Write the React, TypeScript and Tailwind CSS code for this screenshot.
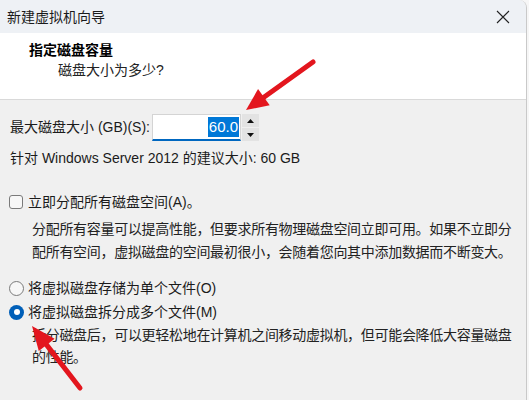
import React from "react";

const font = { fontFamily: '"Liberation Sans", "Noto Sans CJK SC", sans-serif' };

function Arrow({ tail, tip, head = 22, half = 10 }: { tail: [number, number]; tip: [number, number]; head?: number; half?: number }) {
  const dx = tip[0] - tail[0];
  const dy = tip[1] - tail[1];
  const len = Math.hypot(dx, dy);
  const ux = dx / len;
  const uy = dy / len;
  const bx = tip[0] - ux * head;
  const by = tip[1] - uy * head;
  const px = -uy * half;
  const py = ux * half;
  return (
    <g>
      <line x1={tail[0]} y1={tail[1]} x2={bx + ux * 3} y2={by + uy * 3} stroke="#e3161e" strokeWidth={5} strokeLinecap="round" />
      <polygon points={`${tip[0]},${tip[1]} ${bx + px},${by + py} ${bx - px},${by - py}`} fill="#e3161e" />
    </g>
  );
}

export default function App() {
  return (
    <div className="relative w-[529px] h-[400px] overflow-hidden bg-[#f6f6f6] text-[#1b1b1b]" style={font}>
      <div className="w-[527px] h-full flex flex-col bg-[#f0f0f0] border-r border-[#c9c9c9] rounded-tr-[8px] overflow-hidden">
        {/* title bar */}
        <div className="h-[33px] shrink-0 bg-[#eef1f5] flex items-center justify-between pl-[7px] pr-[16px]">
          <span className="text-[14px] leading-none text-[#1a1a1a] pt-[1px]">新建虚拟机向导</span>
          <svg width="14" height="14" viewBox="0 0 14 14">
            <path d="M1 1 L13 13 M13 1 L1 13" stroke="#222" strokeWidth="1.1" />
          </svg>
        </div>

        {/* header */}
        <div className="h-[67px] shrink-0 bg-white border-b border-[#d9d9d9] pl-[29px] pt-[7px]">
          <div className="text-[14px] leading-[20px] font-bold text-black">指定磁盘容量</div>
          <div className="text-[14px] leading-[20px] pl-[29px] text-[#222]">磁盘大小为多少?</div>
        </div>

        {/* body */}
        <div className="flex flex-col pl-[9px] pt-[14px] text-[14px]">
          <div className="flex items-center h-[27px]">
            <span className="w-[143px] pl-[1px]">最大磁盘大小 (GB)(S):</span>
            <div className="w-[89px] h-[27px] bg-white border border-[#d4d4d4] border-b-2 border-b-[#0067c0] flex items-center justify-end pr-[1px]">
              <span className="bg-[#0078d7] text-white text-[15px] leading-[20px] px-[1px]">60.0</span>
            </div>
            <div className="w-[17px] h-[27px] flex flex-col gap-[1px] ml-[1px]">
              <div className="flex-1 bg-[#e3e3e3] flex items-center justify-center">
                <svg width="7" height="4" viewBox="0 0 7 4"><path d="M0 4 L3.5 0 L7 4 Z" fill="#111" /></svg>
              </div>
              <div className="flex-1 bg-[#e3e3e3] flex items-center justify-center">
                <svg width="7" height="4" viewBox="0 0 7 4"><path d="M0 0 L3.5 4 L7 0 Z" fill="#111" /></svg>
              </div>
            </div>
          </div>

          <div className="mt-[7px] leading-[20px] pl-[1px]">针对 Windows Server 2012 的建议大小: 60 GB</div>

          <div className="mt-[24px] flex items-center h-[20px]">
            <span className="w-[14px] h-[14px] rounded-[3px] border border-[#7a7a7a] bg-[#f7f7f7] mr-[5px]" />
            <span>立即分配所有磁盘空间(A)。</span>
          </div>
          <div className="mt-[6px] pl-[23px] leading-[23px] text-[#222] whitespace-nowrap tracking-[-0.3px]">
            分配所有容量可以提高性能，但要求所有物理磁盘空间立即可用。如果不立即分
            <br />
            配所有空间，虚拟磁盘的空间最初很小，会随着您向其中添加数据而不断变大。
          </div>

          <div className="mt-[14px] flex items-center h-[20px]">
            <span className="w-[15px] h-[15px] rounded-full border border-[#7a7a7a] bg-[#f7f7f7] mr-[4px]" />
            <span>将虚拟磁盘存储为单个文件(O)</span>
          </div>
          <div className="mt-[4px] flex items-center h-[20px]">
            <span className="w-[15px] h-[15px] rounded-full bg-[#005fb8] flex items-center justify-center mr-[4px]">
              <span className="w-[6px] h-[6px] rounded-full bg-white" />
            </span>
            <span>将虚拟磁盘拆分成多个文件(M)</span>
          </div>
          <div className="mt-[2px] pl-[23px] leading-[22px] text-[#222] whitespace-nowrap tracking-[-0.3px]">
            拆分磁盘后，可以更轻松地在计算机之间移动虚拟机，但可能会降低大容量磁盘
            <br />
            的性能。
          </div>
        </div>
      </div>

      {/* annotation arrows */}
      <svg className="absolute inset-0 pointer-events-none" width="529" height="400">
        <Arrow tail={[313, 62]} tip={[246, 110]} head={22} half={10} />
        <Arrow tail={[80, 388]} tip={[32, 326]} head={24} half={10} />
      </svg>
    </div>
  );
}
